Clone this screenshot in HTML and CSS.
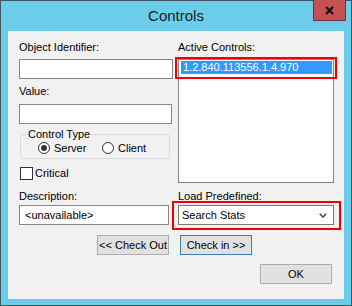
FILE: index.html
```html
<!DOCTYPE html>
<html lang="en">
<head>
<meta charset="UTF-8" />
<title>Controls</title>
<link rel="stylesheet" href="styles.css">
</head>
<body>
<div class="window">
  <div class="titlebar">
    <span class="title">Controls</span>
    <div class="close-btn">
      <svg width="9" height="9" viewBox="0 0 9 9"><path d="M1 1 L8 8 M8 1 L1 8" stroke="#111" stroke-width="2.2" fill="none"/></svg>
    </div>
  </div>
  <div class="client">
    <div class="columns">
      <div class="col col-left">
        <div class="lbl lbl-top">Object Identifier:</div>
        <div class="textbox"></div>
        <div class="lbl lbl-mid">Value:</div>
        <div class="textbox short"></div>
        <fieldset class="group">
          <legend>Control Type</legend>
          <div class="radios">
            <div class="radio first"><span class="radio-dot checked"></span>Server</div>
            <div class="radio"><span class="radio-dot"></span>Client</div>
          </div>
        </fieldset>
        <div class="check"><span class="check-box"></span>Critical</div>
        <div class="lbl lbl-bottom">Description:</div>
        <div class="textbox desc">&lt;unavailable&gt;</div>
      </div>
      <div class="col col-right">
        <div class="lbl lbl-top">Active Controls:</div>
        <div class="listbox">
          <div class="list-item selected marked">1.2.840.113556.1.4.970</div>
        </div>
        <div class="lbl lbl-bottom">Load Predefined:</div>
        <div class="combo marked">
          <span>Search Stats</span>
          <svg width="8" height="5" viewBox="0 0 8 5"><path d="M0.7 0.7 L4 4 L7.3 0.7" stroke="#444" stroke-width="1.5" fill="none"/></svg>
        </div>
      </div>
    </div>
    <div class="btn-row">
      <div class="btn">&lt;&lt; Check Out</div>
      <div class="btn focused">Check in &gt;&gt;</div>
    </div>
    <div class="ok-row">
      <div class="btn">OK</div>
    </div>
  </div>
</div>
</body>
</html>
```
FILE: styles.css
```css
body {
  margin: 0;
  font-family: "Liberation Sans", Arial, sans-serif;
  font-size: 11px;
  color: #000;
}

.window {
  position: relative;
  width: 352px;
  height: 306px;
  box-sizing: border-box;
  border: 1px solid #3f5560;
  background: #6ccdea;
  padding: 0 7px 6px 7px;
}

.titlebar {
  height: 30px;
  display: flex;
  justify-content: center;
  align-items: center;
}

.title {
  font-size: 15px;
  color: #1b1b1b;
  padding-bottom: 2px;
}

.close-btn {
  position: absolute;
  top: -1px;
  right: 5px;
  width: 33px;
  height: 21px;
  box-sizing: border-box;
  background: #c75050;
  border: 1px solid #6a3434;
  border-top: none;
  display: flex;
  justify-content: center;
  align-items: center;
}

.client {
  height: 268px;
  box-sizing: border-box;
  background: #f1f1f1;
  padding: 10px 0 0 11px;
}

.columns {
  display: flex;
}

.col-left {
  width: 154px;
}

.col-right {
  width: 156px;
  margin-left: 5px;
}

.lbl {
  line-height: 13px;
  height: 13px;
}

.lbl-top {
  margin-bottom: 5px;
}

.lbl-mid {
  margin: 6px 0;
}

.lbl-bottom {
  margin: 10px 0 2px;
}

.col-right .lbl-bottom {
  margin-top: 7px;
}

.textbox {
  height: 20px;
  box-sizing: border-box;
  background: #fff;
  border: 1px solid #858585;
  line-height: 18px;
  padding-left: 5px;
}

.textbox.short {
  width: 153px;
}

.textbox.desc {
  width: 150px;
}

/* Control Type group */
.group {
  margin: 4px 0 0 1px;
  width: 150px;
  box-sizing: border-box;
  border: 1px solid #d5dbe0;
  border-radius: 3px;
  padding: 1px 0 4px 0;
}

.group legend {
  line-height: 13px;
  padding: 0 1px;
  margin-left: 6px;
}

.radios {
  display: flex;
  height: 12px;
  align-items: center;
  padding-left: 17px;
}

.radio {
  display: flex;
  align-items: center;
  gap: 4px;
  line-height: 12px;
}

.radio.first {
  width: 64px;
}

.radio-dot {
  width: 12px;
  height: 12px;
  box-sizing: border-box;
  border: 1px solid #333;
  border-radius: 50%;
  background: #fff;
  display: flex;
  justify-content: center;
  align-items: center;
}

.radio-dot.checked::before {
  content: "";
  width: 6px;
  height: 6px;
  border-radius: 50%;
  background: #333;
}

.check {
  margin: 8px 0 0 1px;
  height: 13px;
  display: flex;
  align-items: center;
  gap: 2px;
  line-height: 13px;
}

.check-box {
  width: 13px;
  height: 13px;
  box-sizing: border-box;
  border: 1px solid #333;
  background: #fff;
}

/* Active controls list */
.listbox {
  height: 124px;
  box-sizing: border-box;
  background: #fff;
  border: 1px solid #858585;
  padding: 1px 1px 1px 2px;
}

.list-item {
  height: 13px;
  line-height: 13px;
  padding-left: 2px;
}

.list-item.selected {
  background: #3399ff;
  color: #fff;
}

.combo {
  height: 20px;
  box-sizing: border-box;
  background: #fff;
  border: 1px solid #7a7a7a;
  display: flex;
  align-items: center;
  justify-content: space-between;
  padding: 0 6px 0 3px;
}

/* red annotation boxes */
.marked {
  position: relative;
}

.list-item.marked::after,
.combo.marked::after {
  content: "";
  position: absolute;
  border: 2px solid #ee0000;
}

.list-item.marked::after {
  left: -6px;
  right: -5px;
  top: -4px;
  bottom: -5px;
}

.combo.marked::after {
  left: -7px;
  right: -8px;
  top: -5px;
  bottom: -6px;
}

.btn-row {
  display: flex;
  margin: 10px 0 0 78px;
  gap: 11px;
}

.ok-row {
  display: flex;
  margin: 9px 0 0 241px;
}

.btn {
  width: 72px;
  height: 20px;
  box-sizing: border-box;
  background: #e1e1e1;
  border: 1px solid #adadad;
  display: flex;
  justify-content: center;
  align-items: center;
}

.btn.focused {
  border-color: #3c7fb1;
}
```
